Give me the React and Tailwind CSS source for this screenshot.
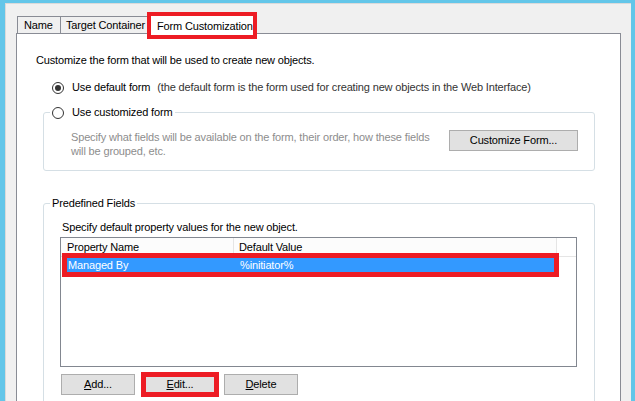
import React from "react";

const font = { fontFamily: '"Liberation Sans", Arial, sans-serif' };

function Radio({ checked }) {
  return (
    <span className="w-[12px] h-[12px] rounded-full border border-[#333333] bg-white flex items-center justify-center shrink-0">
      {checked && <span className="w-[6px] h-[6px] rounded-full bg-[#333333]" />}
    </span>
  );
}

function Btn({ children, w = "w-[74px]" }) {
  return (
    <div className={`${w} h-[21px] border border-[#adadad] bg-[#e1e1e1] flex items-center justify-center text-[11px] text-black whitespace-nowrap`}>
      {children}
    </div>
  );
}

export default function App() {
  return (
    <div
      className="w-[635px] h-[401px] bg-[#63c6e9] pl-[5px] pt-[3px] pr-[4px] overflow-hidden text-[11px] tracking-[-0.15px] text-black whitespace-nowrap"
      style={font}
    >
      <div className="h-[420px] bg-[#f0f0f0] border-l border-t border-[#dadada] pt-[8px] pl-[10px] pr-[10px]">
        {/* Tabs */}
        <div className="flex items-end h-[21px] ml-[1px]">
          <div className="w-[43px] h-[17px] border-l border-t border-[#898c95] bg-[#f0f0f0] flex items-center pl-[6px] leading-[13px]">
            Name
          </div>
          <div className="w-[87px] h-[17px] border-l border-t border-[#898c95] bg-[#f0f0f0] flex items-center pl-[5px] leading-[13px]">
            Target Container
          </div>
          <div className="relative z-10 w-[110px] h-[27px] -mb-[6px] border-[4px] border-[#ed1c24] bg-white flex items-start pt-[4px] pl-[6px] leading-[13px]">
            Form Customization
          </div>
        </div>

        {/* Panel */}
        <div className="h-[400px] border border-[#898c95] bg-white">
          <div className="mt-[20px] pl-[19px] h-[13px] leading-[13px]">
            Customize the form that will be used to create new objects.
          </div>

          <div className="mt-[14px] h-[13px] flex items-center pl-[35px]">
            <Radio checked />
            <span className="ml-[8px] leading-[13px]">Use default form</span>
            <span className="ml-[7px] leading-[13px] text-[#333]">
              (the default form is the form used for creating new objects in the Web Interface)
            </span>
          </div>

          {/* Group 1 */}
          <div className="mt-[18px] ml-[26px] w-[552px] border border-[#d5dfe5] rounded-[3px] pb-[12px]">
            <div className="-mt-[7px] h-[13px] ml-[6px] px-[2px] bg-white flex w-fit items-center">
              <Radio />
              <span className="ml-[8px] mr-[1px] leading-[13px]">Use customized form</span>
            </div>
            <div className="flex items-start mt-[11px]">
              <div className="flex-1 pl-[27px] leading-[14px] text-[#8d8d8d]">
                <div>Specify what fields will be available on the form, their order, how these fields</div>
                <div>will be grouped, etc.</div>
              </div>
              <div className="mr-[16px]">
                <Btn w="w-[129px]">Customize Form...</Btn>
              </div>
            </div>
          </div>

          {/* Group 2 */}
          <div className="mt-[32px] ml-[26px] w-[552px] h-[220px] border border-[#d5dfe5] rounded-[3px]">
            <div className="-mt-[7px] h-[13px] ml-[6px] px-[2px] bg-white flex w-fit items-center leading-[13px]">
              Predefined Fields
            </div>
            <div className="mt-[11px] pl-[18px] h-[13px] leading-[13px]">
              Specify default property values for the new object.
            </div>

            {/* List view */}
            <div className="mt-[3px] ml-[16px] w-[517px] h-[130px] border border-[#828790] bg-white">
              <div className="h-[19px] flex border-b border-[#e5e5e5]">
                <div className="w-[173px] h-full bg-[#fcfcfc] border-r border-[#e5e5e5] pl-[6px] flex items-center leading-[13px]">
                  Property Name
                </div>
                <div className="w-[323px] h-full bg-[#fcfcfc] border-r border-[#e5e5e5] pl-[5px] flex items-center leading-[13px]">
                  Default Value
                </div>
              </div>
              <div className="relative -mt-[4px] ml-[1px] w-[497px] h-[24px] border-[5px] border-[#ed1c24] bg-[#3399ff] text-white flex items-center leading-[13px]">
                <span className="w-[173px] pl-[1px]">Managed By</span>
                <span>%initiator%</span>
              </div>
            </div>

            {/* Buttons */}
            <div className="mt-[5px] ml-[17px] flex items-center">
              <Btn>
                <span><span className="underline">A</span>dd...</span>
              </Btn>
              <div className="ml-[6px] w-[78px] h-[25px] border-[5px] border-[#ed1c24] bg-[#e1e1e1] flex items-center justify-center">
                <span><span className="underline">E</span>dit...</span>
              </div>
              <div className="ml-[5px]">
                <Btn>
                  <span><span className="underline">D</span>elete</span>
                </Btn>
              </div>
            </div>
          </div>
        </div>
      </div>
    </div>
  );
}
